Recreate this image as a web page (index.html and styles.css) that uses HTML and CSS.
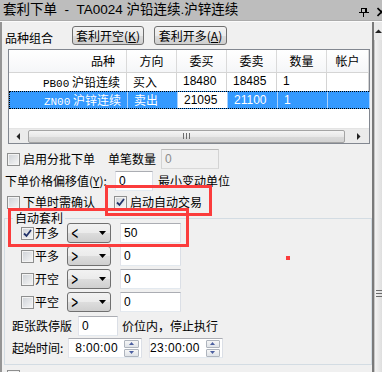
FILE: index.html
```html
<!DOCTYPE html>
<html>
<head>
<meta charset="utf-8">
<link rel="stylesheet" href="styles.css">
</head>
<body>
<div class="title">
  <span class="title-text">套利下单&nbsp; - &nbsp;TA0024 沪铅连续.沪锌连续</span>
  <svg class="pin" width="10" height="20" viewBox="0 0 10 20"><path d="M2.5 8V12M6.5 8V12M7.5 8V12M2 8.5H8M0 12.5H10M4.5 13V17" stroke="#000" stroke-width="1" fill="none"/></svg>
  <svg class="close" width="10" height="20" viewBox="0 0 10 20"><path d="M0.5 8L8.5 16M8.5 8L0.5 16" stroke="#000" stroke-width="1.6" fill="none"/></svg>
</div>
<div class="frame">
  <div class="panel">
    <div class="combo-row">
      <span class="combo-label">品种组合</span>
      <button class="btn">套利开空(<u>K</u>)</button>
      <button class="btn btn-second">套利开多(<u>A</u>)</button>
    </div>

    <div class="list">
      <div class="lrow lhead">
        <div class="c c1">品种</div><div class="c">方向</div><div class="c">委买</div><div class="c">委卖</div><div class="c">数量</div><div class="c">帐户</div>
      </div>
      <div class="lrow ldata">
        <div class="c c1"><span class="code">PB00</span> 沪铅连续</div><div class="c">买入</div><div class="c num">18480</div><div class="c num">18485</div><div class="c num">1</div><div class="c"></div>
      </div>
      <div class="lrow ldata sel">
        <div class="c c1"><span class="code">ZN00</span> 沪锌连续</div><div class="c">卖出</div><div class="c num focus">21095</div><div class="c num">21100</div><div class="c num">1</div><div class="c"></div>
      </div>
      <div class="lempty"></div>
      <div class="hscroll">
        <div class="hs-btn"><svg width="4" height="7" viewBox="0 0 4 7"><path d="M4 0V7L0.5 3.5Z" fill="#222"/></svg></div>
        <div class="hs-thumb"><svg width="7" height="6" viewBox="0 0 7 6"><path d="M0.5 0V6M3.5 0V6M6.5 0V6" stroke="#6b6b6b" stroke-width="1"/></svg></div>
        <div class="hs-btn hs-right"><svg width="4" height="7" viewBox="0 0 4 7"><path d="M0 0V7L3.5 3.5Z" fill="#222"/></svg></div>
      </div>
    </div>

    <div class="opt-row row-a">
      <span class="cb"></span><span class="cb-text">启用分批下单</span>
      <span class="qty-label">单笔数量</span>
      <span class="tb tb-dis qty-box">0</span>
    </div>
    <div class="opt-row row-b">
      <span class="offset-label">下单价格偏移值(<u>Y</u>):</span>
      <span class="tb offset-box">0</span>
      <span class="unit-label">最小变动单位</span>
    </div>
    <div class="opt-row row-c">
      <span class="cb"></span><span class="cb-text">下单时需确认</span>
      <span class="cb checked auto-cb"><svg width="11" height="11" viewBox="0 0 11 11"><path d="M2 5.5L4.5 8L9 2" fill="none" stroke="#22336a" stroke-width="1.8"/></svg></span><span class="cb-text">启动自动交易</span>
    </div>

    <fieldset class="group">
      <legend>自动套利</legend>
      <div class="grow">
        <span class="cb checked"><svg width="11" height="11" viewBox="0 0 11 11"><path d="M2 5.5L4.5 8L9 2" fill="none" stroke="#22336a" stroke-width="1.8"/></svg></span>
        <span class="g-label">开多</span>
        <span class="combo"><span class="op">&lt;</span><svg width="8" height="4" viewBox="0 0 8 4"><path d="M0 0H7L3.5 4Z" fill="#000"/></svg></span>
        <span class="tb g-box">50</span>
      </div>
      <div class="grow">
        <span class="cb"></span>
        <span class="g-label">平多</span>
        <span class="combo"><span class="op">&gt;</span><svg width="8" height="4" viewBox="0 0 8 4"><path d="M0 0H7L3.5 4Z" fill="#000"/></svg></span>
        <span class="tb g-box">0</span>
      </div>
      <div class="grow">
        <span class="cb"></span>
        <span class="g-label">开空</span>
        <span class="combo"><span class="op">&gt;</span><svg width="8" height="4" viewBox="0 0 8 4"><path d="M0 0H7L3.5 4Z" fill="#000"/></svg></span>
        <span class="tb g-box">0</span>
      </div>
      <div class="grow">
        <span class="cb"></span>
        <span class="g-label">平空</span>
        <span class="combo"><span class="op">&gt;</span><svg width="8" height="4" viewBox="0 0 8 4"><path d="M0 0H7L3.5 4Z" fill="#000"/></svg></span>
        <span class="tb g-box">0</span>
      </div>
      <div class="grow limit-row">
        <span class="limit-label">距张跌停版</span>
        <span class="tb limit-box">0</span>
        <span class="limit-tail">价位内，停止执行</span>
      </div>
      <div class="grow time-row">
        <span class="time-label">起始时间:</span>
        <span class="spin">
          <span class="spin-val">8:00:00</span>
          <span class="spin-btns">
            <span class="sb"><svg width="5" height="3" viewBox="0 0 5 3"><path d="M0 3H5L2.5 0Z" fill="#4b5fa0"/></svg></span>
            <span class="sb"><svg width="5" height="3" viewBox="0 0 5 3"><path d="M0 0H5L2.5 3Z" fill="#4b5fa0"/></svg></span>
          </span>
        </span>
        <span class="spin spin-second">
          <span class="spin-val">23:00:00</span>
          <span class="spin-btns">
            <span class="sb"><svg width="5" height="3" viewBox="0 0 5 3"><path d="M0 3H5L2.5 0Z" fill="#4b5fa0"/></svg></span>
            <span class="sb"><svg width="5" height="3" viewBox="0 0 5 3"><path d="M0 0H5L2.5 3Z" fill="#4b5fa0"/></svg></span>
          </span>
        </span>
      </div>
    </fieldset>
    <div class="opt-row row-last"><span class="cb"></span></div>
  </div>
  <div class="vscroll">
    <div class="vs-up"><svg width="7" height="4" viewBox="0 0 7 4"><path d="M0 4H7L3.5 0.5Z" fill="#222"/></svg></div>
    <div class="vs-thumb"><svg width="6" height="7" viewBox="0 0 6 7"><path d="M0 0.5H6M0 3.5H6M0 6.5H6" stroke="#6b6b6b" stroke-width="1"/></svg></div>
  </div>
</div>

<div class="mark mark-auto"></div>
<div class="mark mark-open"></div>
<div class="dot"></div>
</body>
</html>
```

FILE: styles.css
```css
* { box-sizing: border-box; }
html, body { margin: 0; padding: 0; }
body {
  width: 382px;
  height: 372px;
  overflow: hidden;
  position: relative;
  background: #f0f0f0;
  color: #000;
  font-family: "Noto Sans CJK SC", "Liberation Sans", sans-serif;
  font-size: 12px;
  line-height: 14px;
}
u { text-decoration: underline; }

/* title bar */
.title {
  height: 21px;
  background: #bdbdbd;
  border-bottom: 1px solid #ababab;
  display: flex;
  overflow: hidden;
}
.title-text {
  flex: 1;
  padding-left: 3px;
  font-family: "Liberation Sans", "Noto Sans CJK SC", sans-serif;
  font-size: 13.5px;
  line-height: 20px;
  white-space: nowrap;
}
.pin { flex-shrink: 0; margin-right: 8px; }
.close { flex-shrink: 0; margin-right: -5px; }

.frame {
  display: flex;
  height: 351px;
  border-top: 1px solid #fbfbfb;
}
.panel {
  width: 374px;
  flex-shrink: 0;
  border-left: 2px solid #959595;
  border-right: 2px solid #7a7a7a;
  overflow: hidden;
}

/* combo row */
.combo-row {
  display: flex;
  align-items: flex-end;
  height: 19px;
  margin-top: 4px;
  padding-left: 3px;
}
.combo-label { width: 67px; line-height: 14px; margin-bottom: 0; }
.btn {
  height: 19px;
  width: 72px;
  padding: 0;
  border: 1px solid #707070;
  border-radius: 3px;
  background: linear-gradient(#f2f2f2 0%, #ebebeb 50%, #dddddd 51%, #cfcfcf 100%);
  font: inherit;
  line-height: 16px;
  color: #000;
}
.btn-second { margin-left: 10px; width: 73px; }

/* list */
.list {
  margin: 4px 0 0 6px;
  width: 362px;
  height: 95px;
  border: 1px solid #828790;
  background: #fff;
  display: flex;
  flex-direction: column;
}
.lrow {
  display: grid;
  grid-template-columns: 118px 50px 50px 50px 50px 42px;
  height: 18px;
  flex-shrink: 0;
}
.lhead {
  height: 23px;
  border-bottom: 1px solid #d5d5d5;
  background: linear-gradient(#ffffff, #f5f6f8);
}
.lhead .c {
  border-right: 1px solid #dadada;
  text-align: center;
  line-height: 22px;
}
.lhead .c1 { text-align: right; padding-right: 11px; }
.ldata .c {
  border-right: 1px solid #d4d4d4;
  padding-left: 6px;
  line-height: 17px;
  white-space: nowrap;
  overflow: hidden;
}
.ldata .c1 { text-align: right; padding-left: 0; padding-right: 6px; }
.code { font-family: "Liberation Mono", monospace; font-size: 11px; }
.num { font-family: "Liberation Sans", sans-serif; }
.sel {
  background: #3399ff;
  color: #fff;
  border-top: 1px dotted #000;
  border-bottom: 1px dotted #000;
  border-left: 1px dotted #000;
}
.sel .c { border-right-color: #a8d1ff; line-height: 16px; }
.sel .focus { background: #fff; color: #000; }
.lempty { flex: 1; }
.hscroll {
  height: 15px;
  flex-shrink: 0;
  display: flex;
  align-items: center;
  background: #ebebeb;
  border-top: 1px solid #e4e4e4;
}
.hs-btn {
  width: 17px;
  display: flex;
  justify-content: center;
}
.hs-right { margin-left: auto; width: 20px; }
.hs-thumb {
  width: 317px;
  height: 13px;
  margin-left: 2px;
  border: 1px solid #a4a4a4;
  border-radius: 2px;
  background: linear-gradient(#f4f4f4 0%, #e8e8e8 50%, #dadada 51%, #d2d2d2 100%);
  display: flex;
  align-items: center;
  justify-content: center;
}

/* option rows */
.opt-row {
  display: flex;
  align-items: center;
  height: 20px;
  padding-left: 5px;
}
.row-a { margin-top: 5px; }
.row-b { margin-top: 2px; padding-left: 3px; }
.row-c { margin-top: 1px; }
.row-last { margin-top: 5px; align-items: flex-start; }

.cb {
  width: 13px;
  height: 13px;
  flex-shrink: 0;
  border: 1px solid #8e8f8f;
  background: linear-gradient(135deg, #cdd1d6 0%, #f7f7f7 100%);
  box-shadow: inset 0 0 0 1px #f3f3f3;
  display: flex;
  align-items: center;
  justify-content: center;
}
.cb-text { margin-left: 3px; }
.auto-cb { margin-left: 19px; }
.qty-label { margin-left: 13px; }

.tb {
  height: 20px;
  border: 1px solid;
  border-color: #abadb3 #dbdfe6 #e3e9ef #e2e3ea;
  background: #fff;
  padding-left: 3px;
  font-family: "Liberation Sans", sans-serif;
  line-height: 18px;
}
.tb-dis { background: #f0f0f0; color: #8c8c8c; border-color: #b9b9b9 #d3d3d3 #d9d9d9 #d3d3d3; }
.qty-box { width: 58px; margin-left: 5px; }
.offset-label { width: 110px; }
.offset-box { width: 38px; }
.unit-label { margin-left: 5px; }

/* group box */
.group {
  margin: 1px 0 0 2px;
  width: 368px;
  padding: 0 0 6px 0;
  border: 1px solid #d3dce3;
  min-width: 0;
}
.group legend {
  margin-left: 8px;
  padding: 0 2px;
  line-height: 10px;
  height: 10px;
}
.grow {
  display: flex;
  align-items: center;
  height: 20px;
  margin-top: 3px;
  padding-left: 16px;
}
.group legend + .grow { margin-top: 0; }
.g-label { width: 32px; margin-left: 1px; }
.combo {
  width: 44px;
  height: 20px;
  border: 1px solid #707070;
  border-radius: 3px;
  background: linear-gradient(#f2f2f2 0%, #ebebeb 50%, #dddddd 51%, #cfcfcf 100%);
  display: flex;
  align-items: center;
  padding: 0 3px 0 3px;
}
.op {
  font-family: "DejaVu Sans", sans-serif;
  font-size: 12px;
  display: inline-block;
  transform: scale(0.75, 1.45);
  flex: 1;
  text-align: left;
  transform-origin: left center;
}
.g-box { width: 61px; margin-left: 9px; }

.limit-row { margin-top: 4px; padding-left: 7px; }
.limit-label { width: 66px; }
.limit-box { width: 40px; }
.limit-tail { margin-left: 4px; }

.time-row { margin-top: 2px; padding-left: 7px; }
.time-label { width: 56px; }
.spin {
  width: 74px;
  height: 20px;
  border: 1px solid;
  border-color: #abadb3 #dbdfe6 #e3e9ef #e2e3ea;
  background: #fff;
  display: flex;
  align-items: center;
  padding-right: 2px;
}
.spin-second { margin-left: 7px; }
.spin-val {
  flex: 1;
  text-align: right;
  padding-right: 6px;
  font-family: "Liberation Sans", sans-serif;
  letter-spacing: 0.4px;
  line-height: 18px;
}
.spin-btns {
  width: 15px;
  display: flex;
  flex-direction: column;
  gap: 1px;
}
.sb {
  height: 8px;
  border: 1px solid #aeb4bd;
  border-radius: 1px;
  background: linear-gradient(#f6f6f6, #dfe3e8);
  display: flex;
  align-items: center;
  justify-content: center;
}

/* right scrollbar */
.vscroll {
  width: 8px;
  flex-shrink: 0;
  background: #e9e9e9;
  display: flex;
  flex-direction: column;
  overflow: hidden;
}
.vs-up {
  height: 18px;
  flex-shrink: 0;
  display: flex;
  align-items: center;
  justify-content: center;
}
.vs-thumb {
  height: 506px;
  flex-shrink: 0;
  border-left: 1px solid #c6c6c6;
  background: linear-gradient(90deg, #f3f3f3, #dedede);
  display: flex;
  align-items: center;
  justify-content: center;
}

/* red annotation marks drawn over the form */
.mark {
  position: absolute;
  border: 3px solid #fb3c3c;
}
.mark-auto { left: 105px; top: 185px; width: 107px; height: 31px; }
.mark-open { left: 8px; top: 208px; width: 181px; height: 39px; }
.dot {
  position: absolute;
  left: 286px;
  top: 256px;
  width: 4px;
  height: 4px;
  background: #fb3c3c;
}
```
